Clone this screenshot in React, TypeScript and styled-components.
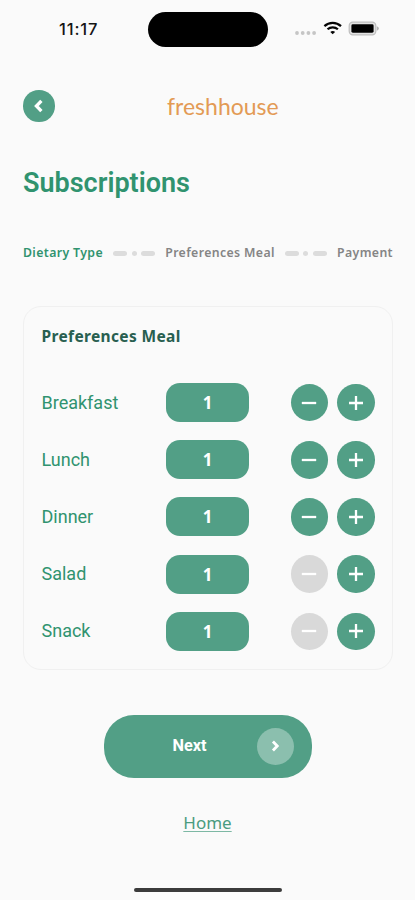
import React, { useState } from "react";
import styled, { createGlobalStyle } from "styled-components";

const GREEN = "#529f86";
const TEXT_GREEN = "#30936f";

const GlobalStyle = createGlobalStyle`
  * { box-sizing: border-box; }
  body { margin: 0; background: #fafafa; }
  button { border: 0; padding: 0; font: inherit; color: inherit; cursor: pointer; }
`;

const Screen = styled.main`
  width: 415px;
  height: 900px;
  overflow: hidden;
  background: #fafafa;
  display: flex;
  flex-direction: column;
  font-family: Roboto, sans-serif;
`;

const StatusBar = styled.header`
  display: grid;
  grid-template-columns: 148px 120px 1fr;
  align-items: center;
  height: 36px;
  margin-top: 11px;
  flex: none;
`;

const Clock = styled.time`
  padding-left: 59px;
  font: 500 16.5px/20px Inter, sans-serif;
  letter-spacing: 0.85px;
  color: #151515;
`;

const Island = styled.div`
  height: 35px;
  border-radius: 18px;
  background: #000;
`;

const StatusIcons = styled.div`
  display: flex;
  padding-left: 26px;
`;

const TopBar = styled.nav`
  display: grid;
  grid-template-columns: 144px 1fr;
  align-items: center;
  height: 32px;
  margin: 43px 23px 0;
  flex: none;
`;

const BackButton = styled.button`
  display: grid;
  place-items: center;
  width: 31.5px;
  height: 31.5px;
  border-radius: 50%;
  background: ${GREEN};
`;

const Brand = styled.div`
  font: 400 23px/32px Lato, sans-serif;
  color: #e39a55;
`;

const Title = styled.h1`
  margin: 45px 0 0 23px;
  font: 600 27px/32px Roboto, sans-serif;
  color: ${TEXT_GREEN};
`;

const Steps = styled.div`
  display: flex;
  align-items: center;
  justify-content: space-between;
  height: 20px;
  margin: 44px 22px 0 23px;
`;

const Step = styled.span<{ $active?: boolean }>`
  font: 600 12.3px/20px "Noto Sans", sans-serif;
  letter-spacing: 0.37px;
  white-space: nowrap;
  color: ${({ $active }) => ($active ? TEXT_GREEN : "#858585")};
`;

const Connector = styled.span`
  display: flex;
  align-items: center;
  gap: 4.5px;
`;

const Dash = styled.i<{ $dot?: boolean }>`
  width: ${({ $dot }) => ($dot ? 5 : 14)}px;
  height: 5px;
  border-radius: 3px;
  background: #dcdcdc;
`;

const Card = styled.section`
  height: 364px;
  margin: 43px 22px 0 23px;
  padding: 18px 17.5px 0 18px;
  border: 1px solid #f0f0f0;
  border-radius: 18px;
  flex: none;
`;

const CardTitle = styled.h2`
  margin: 0 0 27px -0.5px;
  font: 700 15.5px/22px "Noto Sans", sans-serif;
  letter-spacing: 0.35px;
  color: #285f50;
`;

const MealRow = styled.div`
  display: grid;
  grid-template-columns: 124px 83px 1fr;
  align-items: center;
  height: 57.2px;
`;

const MealName = styled.span`
  margin-left: -0.5px;
  font: 400 18px/24px Roboto, sans-serif;
  color: ${TEXT_GREEN};
`;

const Quantity = styled.output`
  display: grid;
  place-items: center;
  height: 39px;
  border-radius: 14px;
  background: ${GREEN};
  color: #fff;
  font: 700 17px/39px "Noto Sans", sans-serif;
`;

const Controls = styled.div`
  display: flex;
  justify-content: flex-end;
  gap: 9px;
`;

const RoundButton = styled.button<{ $muted?: boolean }>`
  display: grid;
  place-items: center;
  width: 37.5px;
  height: 37.5px;
  border-radius: 50%;
  background: ${({ $muted }) => ($muted ? "#d9d9d9" : GREEN)};
`;

const NextButton = styled.button`
  display: grid;
  grid-template-columns: 1fr 37px;
  align-items: center;
  align-self: center;
  width: 208px;
  height: 63px;
  margin-top: 44.5px;
  padding: 0 18px 0 19px;
  border-radius: 30px;
  background: ${GREEN};
  flex: none;
`;

const NextLabel = styled.span`
  text-align: center;
  color: #fff;
  font: 700 16.3px/24px Roboto, sans-serif;
`;

const NextArrow = styled.span`
  display: grid;
  place-items: center;
  width: 37px;
  height: 37px;
  border-radius: 50%;
  background: #8bbfae;
`;

const HomeLink = styled.a`
  align-self: center;
  margin-top: 33px;
  font: 400 17px/24px "Noto Sans", sans-serif;
  color: #4a9c80;
  text-decoration: underline;
  text-decoration-color: #7db8a4;
  text-decoration-thickness: 1px;
  text-underline-offset: 2px;
`;

const HomeIndicator = styled.div`
  align-self: center;
  width: 148px;
  height: 4px;
  margin: auto 0 8px;
  border-radius: 2px;
  background: #3b3b3b;
`;

const Chevron = ({ dir, size }: { dir: "left" | "right"; size: number }) => (
  <svg width={size} height={size} viewBox="0 0 14 14" fill="none" stroke="#fff" strokeWidth="3.3">
    <path d={dir === "left" ? "M9.4 1.8 4.4 7l5 5.2" : "M4.6 1.8l5 5.2-5 5.2"} />
  </svg>
);

const Sign = ({ plus }: { plus?: boolean }) => (
  <svg width="16" height="16" viewBox="0 0 16 16" stroke="#fff" strokeWidth="2.3">
    <path d={plus ? "M1 8h14M8 1v14" : "M.8 8h14.4"} />
  </svg>
);

const DeviceIcons = () => (
  <svg width="86" height="18" viewBox="0 0 86 18">
    <g fill="#c5c5c5">
      <circle cx="3" cy="13" r="1.9" />
      <circle cx="8.7" cy="13" r="1.9" />
      <circle cx="14.4" cy="13" r="1.9" />
      <circle cx="20.1" cy="13" r="1.9" />
    </g>
    <g fill="none" stroke="#050505" strokeWidth="2.2">
      <path d="M30.4 6.1c4.7-4.4 11.9-4.4 16.6 0" />
      <path d="M33.5 9.3c3-2.7 7.4-2.7 10.4 0" />
    </g>
    <path d="M38.7 14.3l-2.4-2.3c1.3-1.3 3.5-1.3 4.8 0z" fill="#050505" />
    <rect x="55.2" y="2.2" width="26.6" height="12.6" rx="3.6" fill="#e2e2e2" stroke="#bdbdbd" strokeWidth="1.2" />
    <rect x="57.4" y="4.3" width="22.2" height="8.4" rx="1.4" fill="#000" />
    <path d="M82.8 6.3v4.4c2.8-.9 2.8-3.500 0-4.400z" fill="#b5b5b5" />
  </svg>
);

const StepConnector = () => (
  <Connector>
    <Dash />
    <Dash $dot />
    <Dash />
  </Connector>
);

type Meal = { name: string; count: number; min: number };

const initialMeals: Meal[] = [
  { name: "Breakfast", count: 1, min: 0 },
  { name: "Lunch", count: 1, min: 0 },
  { name: "Dinner", count: 1, min: 0 },
  { name: "Salad", count: 1, min: 1 },
  { name: "Snack", count: 1, min: 1 },
];

export default function App() {
  const [meals, setMeals] = useState(initialMeals);
  const change = (name: string, by: number) =>
    setMeals((list) =>
      list.map((m) => (m.name === name ? { ...m, count: Math.max(m.min, m.count + by) } : m))
    );

  return (
    <Screen>
      <GlobalStyle />
      <StatusBar>
        <Clock>11:17</Clock>
        <Island />
        <StatusIcons>
          <DeviceIcons />
        </StatusIcons>
      </StatusBar>
      <TopBar>
        <BackButton aria-label="Back">
          <Chevron dir="left" size={14} />
        </BackButton>
        <Brand>freshhouse</Brand>
      </TopBar>
      <Title>Subscriptions</Title>
      <Steps>
        <Step $active>Dietary Type</Step>
        <StepConnector />
        <Step>Preferences Meal</Step>
        <StepConnector />
        <Step>Payment</Step>
      </Steps>
      <Card>
        <CardTitle>Preferences Meal</CardTitle>
        {meals.map((m) => (
          <MealRow key={m.name}>
            <MealName>{m.name}</MealName>
            <Quantity>{m.count}</Quantity>
            <Controls>
              <RoundButton
                $muted={m.count <= m.min}
                aria-label={`Remove ${m.name}`}
                onClick={() => change(m.name, -1)}
              >
                <Sign />
              </RoundButton>
              <RoundButton aria-label={`Add ${m.name}`} onClick={() => change(m.name, 1)}>
                <Sign plus />
              </RoundButton>
            </Controls>
          </MealRow>
        ))}
      </Card>
      <NextButton>
        <NextLabel>Next</NextLabel>
        <NextArrow>
          <Chevron dir="right" size={12} />
        </NextArrow>
      </NextButton>
      <HomeLink>Home</HomeLink>
      <HomeIndicator />
    </Screen>
  );
}
